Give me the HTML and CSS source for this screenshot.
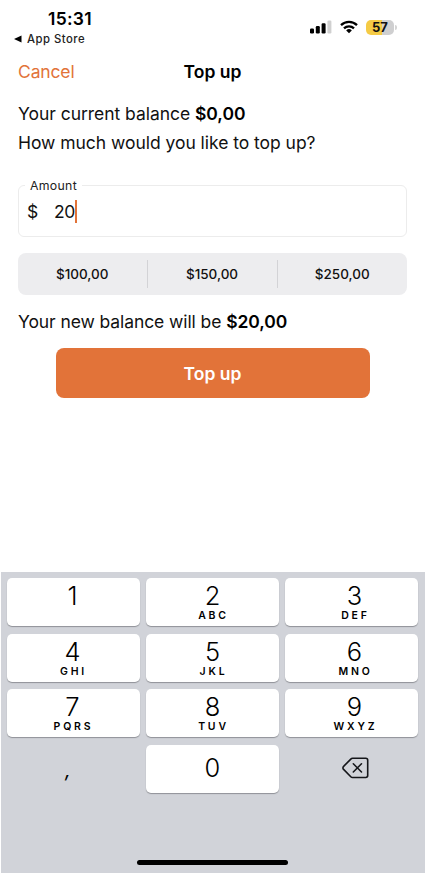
FILE: index.html
```html
<!DOCTYPE html>
<html lang="en">
<head>
<meta charset="utf-8">
<title>Top up</title>
<link rel="stylesheet" href="styles.css">
</head>
<body>
<div class="screen">
  <div class="status">
    <div class="status-left">
      <div class="time">15:31</div>
      <div class="back"><svg width="8" height="8" viewBox="0 0 8 8"><path d="M0 4 7.5 .5v7z"/></svg><span>App Store</span></div>
    </div>
    <div class="status-right">
      <svg class="signal" width="22" height="14" viewBox="0 0 22 14"><rect x="0" y="8.4" width="4" height="5" rx="1.2"/><rect x="5.8" y="6" width="4" height="7.4" rx="1.2"/><rect x="11.6" y="3.2" width="4" height="10.2" rx="1.2"/><rect x="17.4" y=".6" width="4" height="12.8" rx="1.2" fill="#d0d0d0"/></svg>
      <svg class="wifi" width="18" height="14" viewBox="0 0 18 14" fill="none" stroke="#000" stroke-width="2.3"><path d="M1 5.1a11.5 11.5 0 0 1 16 0"/><path d="M4 8.3a7.2 7.2 0 0 1 10 0"/><path d="M9 13.2 6.2 10.4a4 4 0 0 1 5.6 0z" fill="#000" stroke="none"/></svg>
      <div class="battery">57</div>
      <div class="battery-cap"></div>
    </div>
  </div>
  <div class="nav"><a class="cancel">Cancel</a><h1>Top up</h1><span></span></div>
  <main>
    <p class="current"><span>Your current balance</span> <b>$0,00</b></p>
    <p class="question">How much would you like to top up?</p>
    <fieldset class="field">
      <legend>Amount</legend>
      <div class="input"><span class="currency">$</span><span class="value">20</span><i class="caret"></i></div>
    </fieldset>
    <div class="presets"><span>$100,00</span><span>$150,00</span><span>$250,00</span></div>
    <p class="new">Your new balance will be <b>$20,00</b></p>
    <button class="submit">Top up</button>
  </main>
  <div class="keyboard">
    <div class="keys">
      <div class="key"><b>1</b></div>
      <div class="key"><b>2</b><small>ABC</small></div>
      <div class="key"><b>3</b><small>DEF</small></div>
      <div class="key"><b>4</b><small>GHI</small></div>
      <div class="key"><b>5</b><small>JKL</small></div>
      <div class="key"><b>6</b><small>MNO</small></div>
      <div class="key"><b>7</b><small>PQRS</small></div>
      <div class="key"><b>8</b><small>TUV</small></div>
      <div class="key"><b>9</b><small>WXYZ</small></div>
      <div class="key plain comma">,</div>
      <div class="key zero"><b>0</b></div>
      <div class="key plain erase"><svg width="27" height="22" viewBox="0 0 27 22" fill="none" stroke="#15161a" stroke-width="1.6" stroke-linecap="round" stroke-linejoin="round"><path d="M10.6 1.3h13.2a1.9 1.9 0 0 1 1.9 1.9v15.4a1.9 1.9 0 0 1-1.9 1.9H10.6a2.6 2.6 0 0 1-1.8-.8L1.6 12.4a2 2 0 0 1 0-3L8.8 2.1a2.6 2.6 0 0 1 1.8-.8z"/><path d="m11.3 6.8 8.2 8.2m0-8.2-8.2 8.2"/></svg></div>
    </div>
    <div class="home"></div>
  </div>
</div>
</body>
</html>
```
FILE: styles.css
```css
* { box-sizing: border-box; }
body { margin: 0; background: #fff; color: #111; font-family: Inter, "Liberation Sans", sans-serif; }
p, h1 { margin: 0; }
svg { display: block; }
.screen { width: 425px; height: 874px; display: flex; flex-direction: column; overflow: hidden; }

.status { display: flex; justify-content: space-between; height: 52px; padding: 9px 28px 0 14px; }
.time { width: 112px; text-align: center; font-size: 17.5px; font-weight: 600; letter-spacing: .3px; line-height: 20px; color: #000; }
.back { display: flex; align-items: center; gap: 5px; height: 19px; font-size: 11.3px; font-weight: 500; letter-spacing: .5px; color: #222; }
.status-right { display: flex; align-items: flex-start; padding-top: 10.5px; }
.signal { margin: 0 8px 0 0; }
.wifi { margin-right: 8px; }
.battery { width: 28px; height: 15px; border-radius: 5px; background: linear-gradient(90deg, #f5cb45 57%, #cfcfd0 57%); color: #111; font-size: 13px; font-weight: 700; line-height: 15px; text-align: center; }
.battery-cap { width: 2px; height: 5px; margin: 5px 0 0 1px; border-radius: 0 2px 2px 0; background: #d4d4d4; }

.nav { display: grid; grid-template-columns: 1fr auto 1fr; align-items: center; height: 40px; padding: 0 18px; }
.cancel { padding-bottom: 2px; color: #e27339; font-size: 17.5px; letter-spacing: -.15px; }
.nav h1 { color: #000; font-size: 17.5px; font-weight: 600; line-height: 24px; }

main { display: flex; flex-direction: column; flex: 1; padding: 7px 18px 0; font-size: 17.5px; }
main p { height: 29px; line-height: 29px; letter-spacing: -.04px; white-space: nowrap; }
main b { color: #000; font-weight: 600; }
.field { height: 59px; margin: 21px 0 0; padding: 0 8px; border: 1px solid #ececec; border-radius: 6px; min-width: 0; }
legend { margin-left: -2px; padding: 0 5px; font-size: 12.3px; line-height: 15px; letter-spacing: .3px; color: #222; }
.input { display: flex; align-items: center; height: 36px; }
.currency { width: 27px; }
.value { letter-spacing: -.3px; }
.caret { width: 2px; height: 23px; background: #e27339; }
.presets { display: grid; grid-template-columns: 128.5px 130px 1fr; align-items: center; height: 42px; margin-top: 16px; border-radius: 8px; background: #ededef; font-size: 13.5px; font-weight: 500; }
.presets span { height: 28px; line-height: 28px; text-align: center; }
.presets span + span { border-left: 1px solid #d3d3d6; }
.new { margin-top: 12px; }
main .new, .new b { letter-spacing: -.09px; }
.submit { align-self: center; width: 314px; height: 50px; margin-top: 12px; padding: 0; border: 0; border-radius: 8px; background: #e27339; color: #fff; font: 600 17.5px Inter, sans-serif; }

.keyboard { display: flex; flex-direction: column; justify-content: space-between; align-items: center; height: 301px; margin: 0 0 1px 1px; padding: 6px 7px 8px 6px; background: #d1d3d9; }
.keys { display: grid; grid-template-columns: repeat(3, 1fr); grid-template-rows: repeat(4, 48.2px); gap: 7.4px 6px; width: 100%; }
.key { display: flex; flex-direction: column; align-items: center; padding-top: 4px; border-radius: 5px; background: #fff; box-shadow: 0 1px 1px #8f9197; color: #000; }
.key:nth-child(3n + 1) { padding-right: 2px; }
.key:nth-child(3n) { padding-left: 6px; }
.key b { font-size: 25.5px; font-weight: 350; line-height: 28px; }
.key small { margin: 0 0 0 2px; font-size: 10.5px; font-weight: 600; line-height: 11px; letter-spacing: 2.8px; }
.key.plain { background: none; box-shadow: none; }
.key.zero { padding-top: 9px; }
.key.comma { padding: 12px 11px 0 0; font-size: 20px; font-style: italic; line-height: 26px; }
.key.erase { padding: 12px 0 0 7px; }
.home { width: 151px; height: 5px; border-radius: 3px; background: #000; }
```
